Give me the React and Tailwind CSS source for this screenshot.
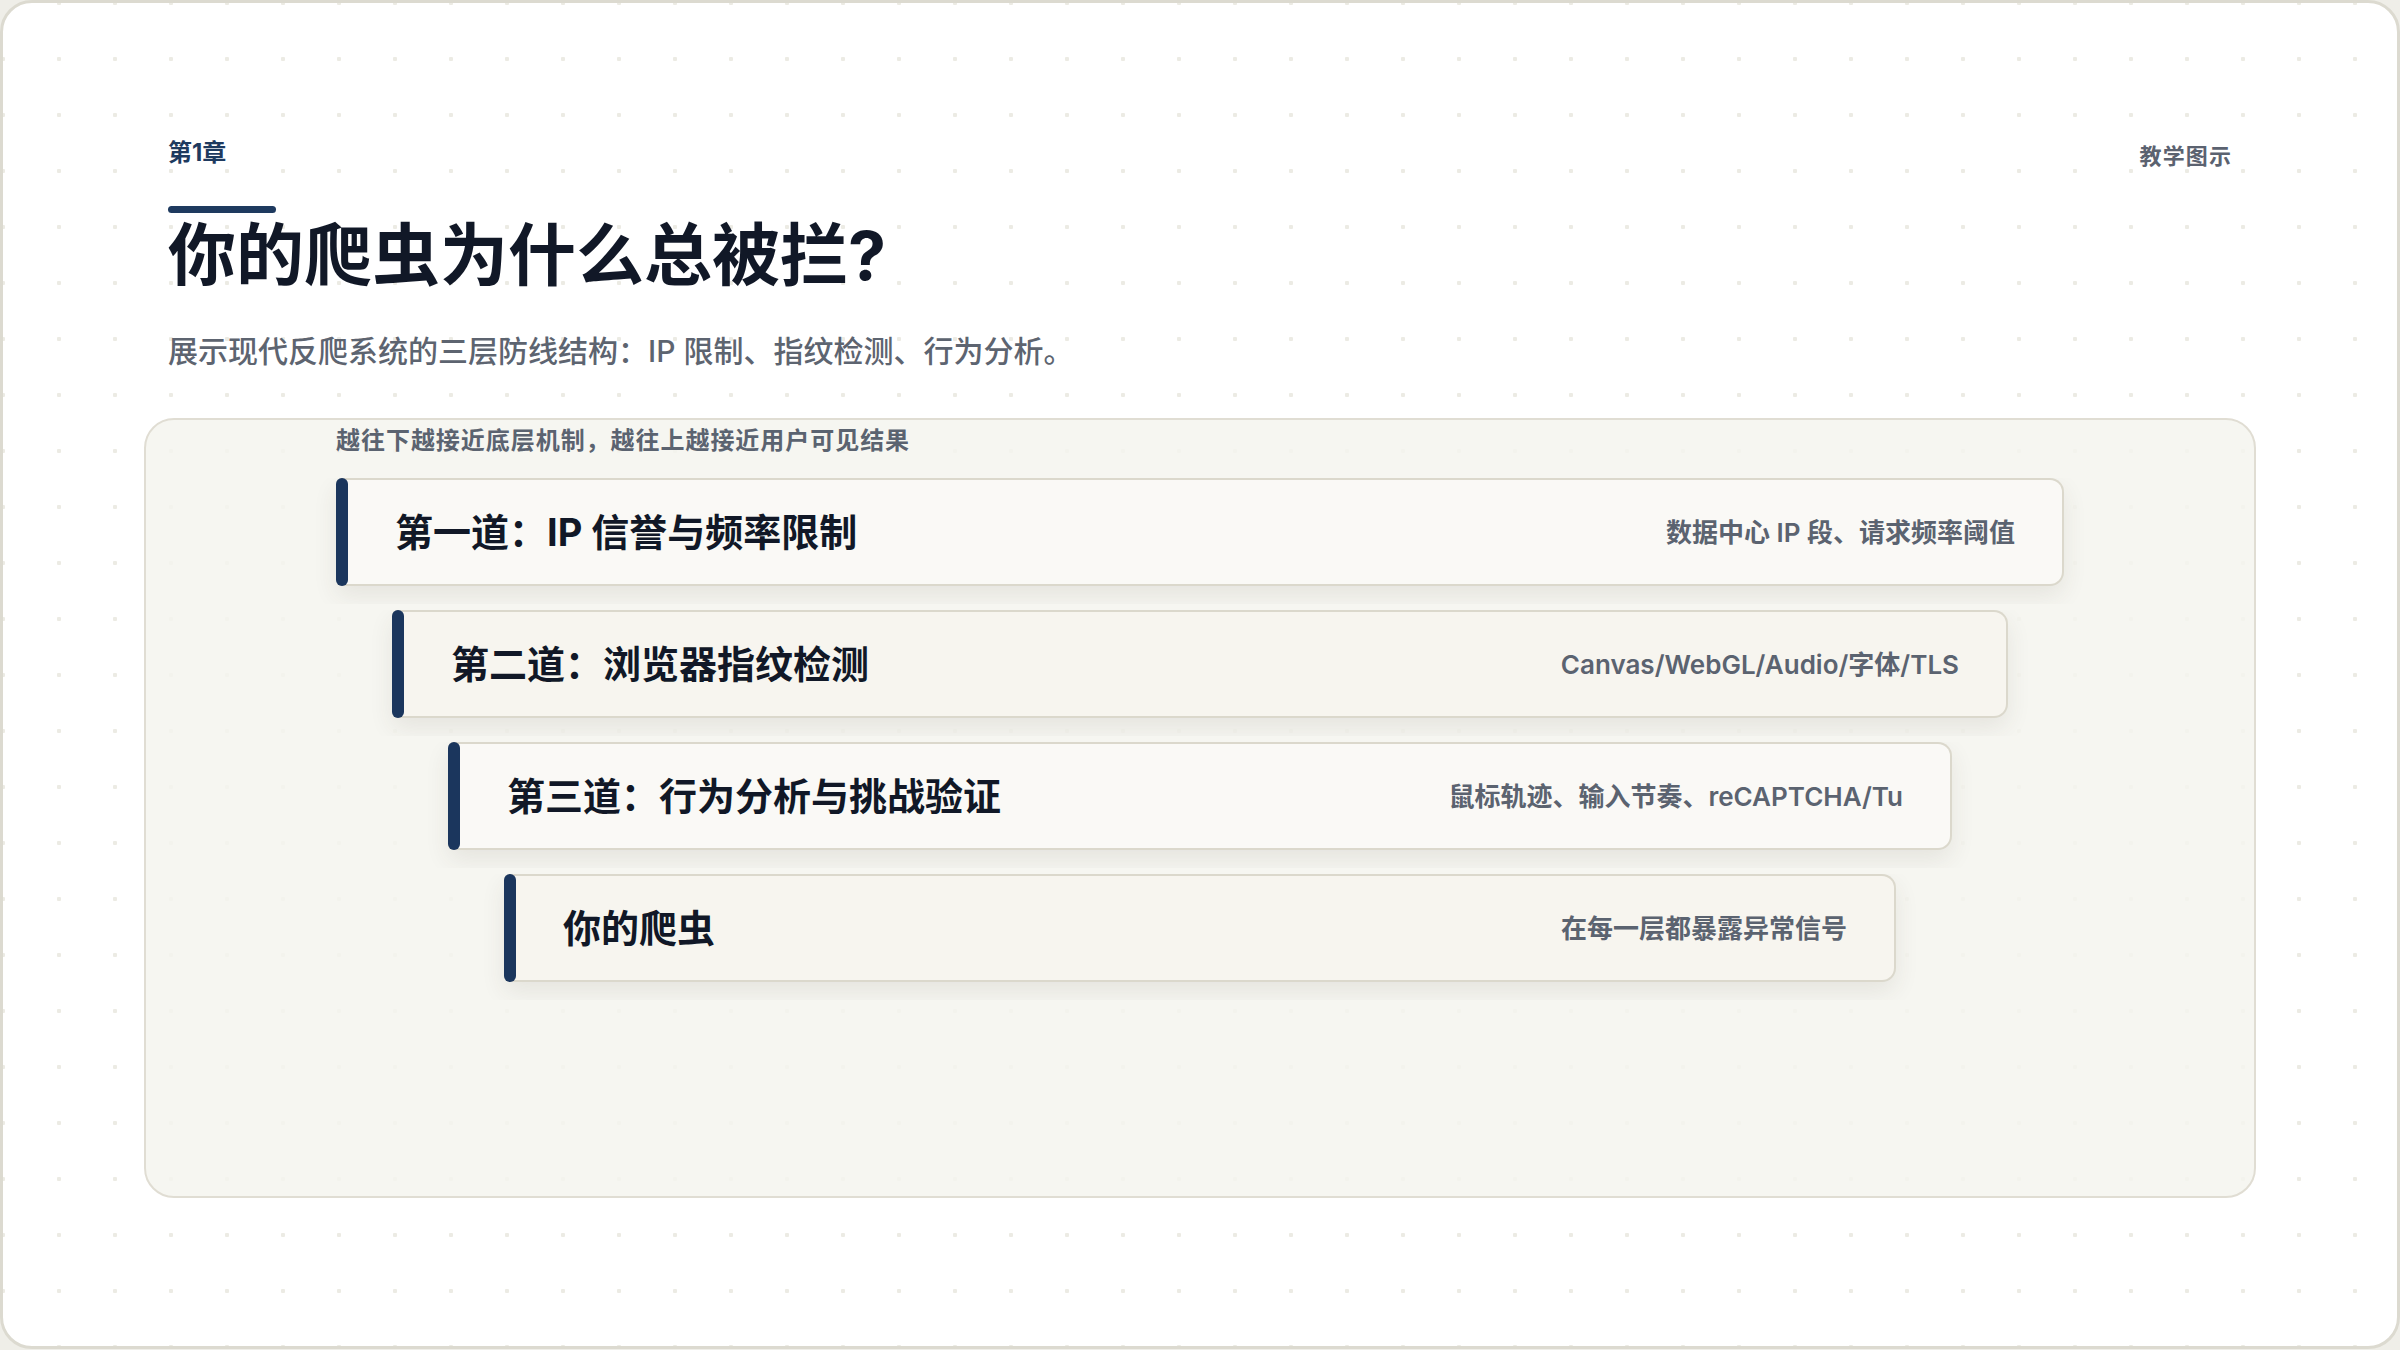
const layers = [
  {
    title: "第一道：IP 信誉与频率限制",
    note: "数据中心 IP 段、请求频率阈值",
    bg: "bg-[#faf9f6]",
    inset: "mx-0",
  },
  {
    title: "第二道：浏览器指纹检测",
    note: "Canvas/WebGL/Audio/字体/TLS",
    bg: "bg-[#f7f5ef]",
    inset: "mx-[56px]",
  },
  {
    title: "第三道：行为分析与挑战验证",
    note: "鼠标轨迹、输入节奏、reCAPTCHA/Tu",
    bg: "bg-[#faf9f6]",
    inset: "mx-[112px]",
  },
  {
    title: "你的爬虫",
    note: "在每一层都暴露异常信号",
    bg: "bg-[#f7f5ef]",
    inset: "mx-[168px]",
  },
];

function LayerCard({ title, note, bg, inset }) {
  return (
    // wrapper clips the card shadow into a band below it
    <div className="-mx-[40px] overflow-hidden px-[40px] pb-[18px]">
      <div
        className={`${inset} ${bg} flex h-[108px] items-center rounded-l-[6px] rounded-r-[14px] border-2 border-l-0 border-[#dbd8cc] shadow-[0_10px_24px_rgba(70,60,40,0.09)]`}
      >
        <div className="-my-[2px] w-[12px] self-stretch rounded-full bg-[#1b365d]" />
        <div className="flex flex-1 items-center justify-between pl-[47px] pr-[47px]">
          <span className="text-[38px] font-bold text-[#111827]">{title}</span>
          <span className="text-[26px] font-semibold text-[#5b6370]">{note}</span>
        </div>
      </div>
    </div>
  );
}

export default function App() {
  return (
    <div className="h-[1350px] w-[2400px] bg-[#efeee8] font-['Inter','Noto_Sans_CJK_SC',sans-serif]">
      <div className="h-[1349px] rounded-[32px] border-[3px] border-[#dcdad0] bg-white bg-[radial-gradient(circle,#ecebe4_2px,transparent_2.5px)] bg-[length:56px_56px] bg-[position:-28px_-28px] px-[165px] pt-[136px]">
        {/* header */}
        <div className="flex items-start justify-between">
          <div className="text-[24px] font-bold leading-[28px] text-[#1e3a5f]">第1章</div>
          <div className="pt-[3px] text-[22px] font-bold leading-[28px] tracking-[0.05em] text-[#5b6270]">
            教学图示
          </div>
        </div>
        <div className="mt-[36px] h-[7px] w-[108px] rounded-full bg-[#1e3a5f]" />
        <h1 className="mt-[5px] text-[68px] font-bold leading-[75px] text-[#111827]">
          你的爬虫为什么总被拦?
        </h1>
        <p className="mt-[38px] text-[30px] font-medium leading-[40px] text-[#5d6470]">
          展示现代反爬系统的三层防线结构：IP 限制、指纹检测、行为分析。
        </p>

        {/* layer diagram */}
        <div className="-mx-6 mt-[47px] h-[780px] rounded-[30px] border-2 border-[#e0ddd3] bg-[#f5f4ee]/85 pt-[6px]">
          <div className="mx-auto w-[1728px]">
            <div className="text-[24px] font-semibold leading-[30px] tracking-[0.04em] text-[#5b6370]">
              越往下越接近底层机制，越往上越接近用户可见结果
            </div>
            <div className="mt-[22px] flex flex-col gap-[6px]">
              {layers.map((layer) => (
                <LayerCard key={layer.title} {...layer} />
              ))}
            </div>
          </div>
        </div>
      </div>
    </div>
  );
}
